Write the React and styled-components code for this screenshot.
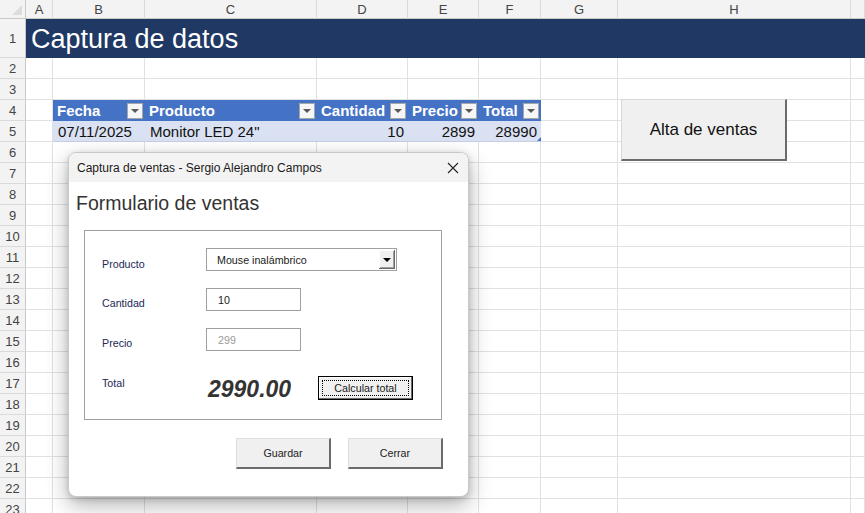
import React from "react";
import styled, { createGlobalStyle } from "styled-components";

const GlobalStyle = createGlobalStyle`
  html, body {
    margin: 0;
    padding: 0;
    background: #ffffff;
    overflow: hidden;
  }
  body {
    font-family: "Liberation Sans", Arial, sans-serif;
  }
`;

const columns = [
  { key: "A", width: 27 },
  { key: "B", width: 92 },
  { key: "C", width: 172 },
  { key: "D", width: 91 },
  { key: "E", width: 71 },
  { key: "F", width: 62 },
  { key: "G", width: 77 },
  { key: "H", width: 233 },
  { key: "I", width: null },
];

const tableHeaders = ["Fecha", "Producto", "Cantidad", "Precio", "Total"];
const tableRow = [
  { value: "07/11/2025", align: "left" },
  { value: 'Monitor LED 24"', align: "left" },
  { value: "10", align: "right" },
  { value: "2899", align: "right" },
  { value: "28990", align: "right" },
];

const Page = styled.div`
  position: relative;
  width: 865px;
  height: 513px;
  overflow: hidden;
`;

const Sheet = styled.div`
  display: grid;
  grid-template-columns: 26px ${columns
      .filter((c) => c.width)
      .map((c) => `${c.width}px`)
      .join(" ")} 1fr;
  grid-template-rows: 19px 39px repeat(22, 21px);
  font-family: "Liberation Sans", Arial, sans-serif;
`;

const Corner = styled.div`
  position: relative;
  background: #f3f3f3;
  border-right: 1px solid #c8c8c8;
  border-bottom: 1px solid #c8c8c8;
  box-sizing: border-box;

  &::after {
    content: "";
    position: absolute;
    right: 3px;
    bottom: 3px;
    border-left: 10px solid transparent;
    border-bottom: 10px solid #dcdcdc;
  }
`;

const ColHead = styled.div`
  background: #f3f3f3;
  border-right: 1px solid #dadada;
  border-bottom: 1px solid #c8c8c8;
  box-sizing: border-box;
  display: flex;
  align-items: center;
  justify-content: center;
  font-size: 13px;
  color: #444;
`;

const RowHead = styled.div`
  background: #f3f3f3;
  border-right: 1px solid #c8c8c8;
  border-bottom: 1px solid #dadada;
  box-sizing: border-box;
  display: flex;
  align-items: center;
  justify-content: center;
  font-size: 13px;
  color: #444;
`;

const Cell = styled.div`
  border-right: 1px solid #e1e1e1;
  border-bottom: 1px solid #e1e1e1;
  box-sizing: border-box;
`;

const TitleCell = styled.div`
  grid-column: 2 / -1;
  background: #203864;
  color: #ffffff;
  font-size: 27px;
  display: flex;
  align-items: center;
  padding-left: 5px;
  padding-top: 2px;
  box-sizing: border-box;
`;

const HeadCell = styled.div`
  background: #4472c4;
  color: #ffffff;
  font-weight: bold;
  font-size: 15px;
  display: flex;
  align-items: center;
  justify-content: space-between;
  padding: 0 2px 0 4px;
  box-sizing: border-box;
  white-space: nowrap;
  overflow: hidden;
`;

const FilterButton = styled.span`
  flex: none;
  width: 16px;
  height: 16px;
  box-sizing: border-box;
  background: #f6f6f6;
  border: 1px solid #a6a6a6;
  display: flex;
  align-items: center;
  justify-content: center;

  &::after {
    content: "";
    border-left: 4px solid transparent;
    border-right: 4px solid transparent;
    border-top: 4px solid #595959;
    margin-top: 1px;
  }
`;

const DataCell = styled.div`
  position: relative;
  background: #d9e1f2;
  border-bottom: 1px solid #c5cfe6;
  box-sizing: border-box;
  font-size: 15px;
  color: #111;
  display: flex;
  align-items: center;
  justify-content: ${(p) => (p.$align === "right" ? "flex-end" : "flex-start")};
  padding: 0 4px 0 5px;
  white-space: nowrap;
`;

// the last cell carries the table's resize handle
const LastDataCell = styled(DataCell)`
  &::after {
    content: "";
    position: absolute;
    right: 0;
    bottom: 0;
    border-left: 4px solid transparent;
    border-bottom: 4px solid #4472c4;
  }
`;

const ShapeButton = styled.div`
  position: absolute;
  left: 621px;
  top: 99px;
  width: 166px;
  height: 62px;
  box-sizing: border-box;
  background: #f0f0f0;
  border-top: 1px solid #d8d8d8;
  border-left: 1px solid #d8d8d8;
  border-right: 2px solid #6b6b6b;
  border-bottom: 2px solid #6b6b6b;
  display: flex;
  align-items: center;
  justify-content: center;
  font-size: 17px;
  color: #111;
`;

/* UserForm window */
const Window = styled.div`
  position: absolute;
  left: 68px;
  top: 152px;
  width: 401px;
  height: 345px;
  box-sizing: border-box;
  background: #ffffff;
  border: 1px solid #c9c9c9;
  border-radius: 8px;
  overflow: hidden;
  box-shadow: 0 8px 22px rgba(0, 0, 0, 0.3), 0 2px 6px rgba(0, 0, 0, 0.15);
  display: flex;
  flex-direction: column;
`;

const TitleBar = styled.div`
  height: 29px;
  flex: none;
  background: #f3f3f3;
  display: flex;
  align-items: center;
  justify-content: space-between;
  padding: 0 9px 0 8px;
  font-size: 12px;
  color: #1a1a1a;
`;

const CloseIcon = () => (
  <svg width="12" height="12" viewBox="0 0 12 12">
    <path d="M1 1 L11 11 M11 1 L1 11" stroke="#222" strokeWidth="1.1" />
  </svg>
);

const FormBody = styled.div`
  flex: 1;
  display: flex;
  flex-direction: column;
  padding: 9px 25px 0 15px;
`;

const Heading = styled.div`
  font-size: 19.5px;
  color: #333;
  line-height: 24px;
  margin: 0 0 15px -8px;
`;

const Frame = styled.div`
  width: 358px;
  height: 190px;
  box-sizing: border-box;
  border: 1px solid #a0a0a0;
  padding: 17px 0 0 17px;
  display: grid;
  grid-template-columns: 104px auto;
  grid-template-rows: 40px 40px 48px;
  font-family: "Liberation Sans", Tahoma, sans-serif;
  font-size: 10.7px;
`;

const Label = styled.div`
  color: #232856;
  padding-top: ${(p) => p.$offset}px;
  line-height: 14px;
`;

const Control = styled.div`
  display: flex;
  align-items: flex-start;
  gap: 25px;
`;

const Combo = styled.div`
  width: 191px;
  height: 23px;
  box-sizing: border-box;
  border: 1px solid #a0a0a0;
  display: flex;
  align-items: center;
  justify-content: space-between;
  padding: 0 1px 0 10px;
  color: #1a1a1a;
`;

const ComboArrow = styled.span`
  width: 16px;
  height: 19px;
  box-sizing: border-box;
  background: #f0f0f0;
  box-shadow: inset -1px -1px #696969, inset 1px 1px #ffffff, inset -2px -2px #a0a0a0;
  display: flex;
  align-items: center;
  justify-content: center;

  &::after {
    content: "";
    border-left: 4px solid transparent;
    border-right: 4px solid transparent;
    border-top: 4px solid #000;
  }
`;

const TextBox = styled.div`
  width: 95px;
  height: 23px;
  box-sizing: border-box;
  border: 1px solid #a0a0a0;
  display: flex;
  align-items: center;
  padding-left: 11px;
  color: ${(p) => (p.$disabled ? "#9a9a9a" : "#1a1a1a")};
`;

const TotalValue = styled.div`
  font-size: 23px;
  font-weight: bold;
  font-style: italic;
  color: #333;
  line-height: 24px;
  margin-top: 1px;
  width: 85px;
  padding-left: 2px;
`;

const FocusButton = styled.div`
  width: 95px;
  height: 24px;
  box-sizing: border-box;
  border: 1px solid #000;
  background: #f0f0f0;
  box-shadow: inset -1px -1px #696969, inset 1px 1px #ffffff;
  padding: 3px;
  display: flex;
`;

const FocusRing = styled.span`
  flex: 1;
  border: 1px dotted #000;
  display: flex;
  align-items: center;
  justify-content: center;
  color: #1a1a1a;
`;

const Actions = styled.div`
  display: flex;
  justify-content: flex-end;
  gap: 17px;
  margin-top: 18px;
`;

const FormButton = styled.div`
  width: 95px;
  height: 31px;
  box-sizing: border-box;
  background: #f0f0f0;
  border-top: 1px solid #dedede;
  border-left: 1px solid #dedede;
  border-right: 2px solid #6b6b6b;
  border-bottom: 2px solid #6b6b6b;
  display: flex;
  align-items: center;
  justify-content: center;
  font-size: 10.7px;
  color: #222;
`;

const SalesForm = () => (
  <Window>
    <TitleBar>
      <span>Captura de ventas - Sergio Alejandro Campos</span>
      <CloseIcon />
    </TitleBar>
    <FormBody>
      <Heading>Formulario de ventas</Heading>
      <Frame>
        <Label $offset={9}>Producto</Label>
        <Control>
          <Combo>
            <span>Mouse inalámbrico</span>
            <ComboArrow />
          </Combo>
        </Control>

        <Label $offset={8}>Cantidad</Label>
        <Control>
          <TextBox>10</TextBox>
        </Control>

        <Label $offset={8}>Precio</Label>
        <Control>
          <TextBox $disabled>299</TextBox>
        </Control>

        <Label $offset={0}>Total</Label>
        <Control>
          <TotalValue>2990.00</TotalValue>
          <FocusButton>
            <FocusRing>Calcular total</FocusRing>
          </FocusButton>
        </Control>
      </Frame>
      <Actions>
        <FormButton>Guardar</FormButton>
        <FormButton>Cerrar</FormButton>
      </Actions>
    </FormBody>
  </Window>
);

const plainCells = (row, from = 0) =>
  columns.slice(from).map((c) => <Cell key={`${row}-${c.key}`} />);

export default function App() {
  const rows = [];
  for (let r = 2; r <= 23; r++) {
    rows.push(<RowHead key={`h${r}`}>{r}</RowHead>);
    if (r === 4) {
      rows.push(<Cell key="4-A" />);
      tableHeaders.forEach((h) =>
        rows.push(
          <HeadCell key={`4-${h}`}>
            <span>{h}</span>
            <FilterButton />
          </HeadCell>
        )
      );
      rows.push(...plainCells(4, 6));
    } else if (r === 5) {
      rows.push(<Cell key="5-A" />);
      tableRow.forEach((d, i) => {
        const C = i === tableRow.length - 1 ? LastDataCell : DataCell;
        rows.push(
          <C key={`5-${i}`} $align={d.align}>
            {d.value}
          </C>
        );
      });
      rows.push(...plainCells(5, 6));
    } else {
      rows.push(...plainCells(r));
    }
  }

  return (
    <Page>
      <GlobalStyle />
      <Sheet>
        <Corner />
        {columns.map((c) => (
          <ColHead key={c.key}>{c.key === "I" ? "" : c.key}</ColHead>
        ))}
        <RowHead>1</RowHead>
        <TitleCell>Captura de datos</TitleCell>
        {rows}
      </Sheet>
      <ShapeButton>Alta de ventas</ShapeButton>
      <SalesForm />
    </Page>
  );
}
